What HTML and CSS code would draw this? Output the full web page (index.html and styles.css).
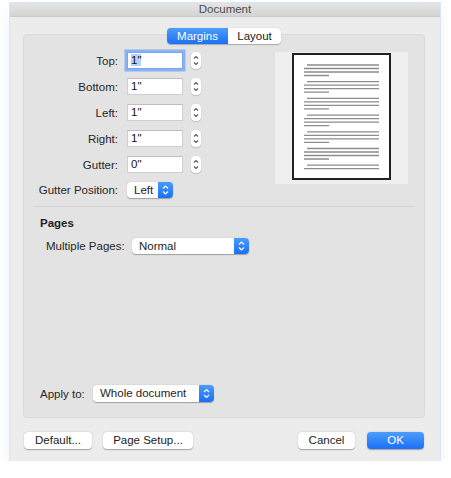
FILE: index.html
```html
<!DOCTYPE html>
<html>
<head>
<meta charset="utf-8">
<link rel="stylesheet" href="styles.css">
</head>
<body>
<div class="window">
  <div class="titlebar">Document</div>
  <div class="content">
    <div class="tabs">
      <div class="tab active">Margins</div>
      <div class="tab">Layout</div>
    </div>
    <div class="group">
      <div class="top">
        <div class="form">
          <div class="row">
            <span class="label">Top:</span>
            <span class="field focus"><span class="sel">1"</span></span>
            <span class="stepper"><svg width="10" height="17" viewBox="0 0 10 17"><path d="M3 6.5 L5 4.5 L7 6.5 M3 10.5 L5 12.5 L7 10.5" fill="none" stroke="#555" stroke-width="1.1"/></svg></span>
          </div>
          <div class="row">
            <span class="label">Bottom:</span>
            <span class="field">1"</span>
            <span class="stepper"><svg width="10" height="17" viewBox="0 0 10 17"><path d="M3 6.5 L5 4.5 L7 6.5 M3 10.5 L5 12.5 L7 10.5" fill="none" stroke="#555" stroke-width="1.1"/></svg></span>
          </div>
          <div class="row">
            <span class="label">Left:</span>
            <span class="field">1"</span>
            <span class="stepper"><svg width="10" height="17" viewBox="0 0 10 17"><path d="M3 6.5 L5 4.5 L7 6.5 M3 10.5 L5 12.5 L7 10.5" fill="none" stroke="#555" stroke-width="1.1"/></svg></span>
          </div>
          <div class="row">
            <span class="label">Right:</span>
            <span class="field">1"</span>
            <span class="stepper"><svg width="10" height="17" viewBox="0 0 10 17"><path d="M3 6.5 L5 4.5 L7 6.5 M3 10.5 L5 12.5 L7 10.5" fill="none" stroke="#555" stroke-width="1.1"/></svg></span>
          </div>
          <div class="row">
            <span class="label">Gutter:</span>
            <span class="field">0"</span>
            <span class="stepper"><svg width="10" height="17" viewBox="0 0 10 17"><path d="M3 6.5 L5 4.5 L7 6.5 M3 10.5 L5 12.5 L7 10.5" fill="none" stroke="#555" stroke-width="1.1"/></svg></span>
          </div>
          <div class="row row-pop">
            <span class="label">Gutter Position:</span>
            <span class="popup pop-gutter"><span class="pop-text">Left</span><span class="pop-arrow"><svg width="15" height="16" viewBox="0 0 15 16"><path d="M5 6.5 L7.5 4 L10 6.5 M5 9.5 L7.5 12 L10 9.5" fill="none" stroke="#fff" stroke-width="1.2"/></svg></span></span>
          </div>
        </div>
        <div class="preview">
          <svg width="99" height="127" viewBox="0 0 99 127">
            <rect x="1" y="1" width="97" height="125" fill="#fff" stroke="#222" stroke-width="2"/>
            <g stroke="#8c8c8c" stroke-width="1.3">
              <path d="M15 12H87M12 15.5H87M12 19H87M12 22.5H37"/>
              <path d="M15 28.7H87M12 32.2H87M12 35.7H87M12 39.2H37"/>
              <path d="M15 45.4H87M12 48.9H87M12 52.4H87M12 55.9H37"/>
              <path d="M15 62.1H87M12 65.6H87M12 69.1H87M12 72.6H37"/>
              <path d="M15 78.8H87M12 82.3H87M12 85.8H87M12 89.3H37"/>
              <path d="M15 95.5H87M12 99H87M12 102.5H87M12 106H37"/>
              <path d="M15 112.2H87M12 115.7H87"/>
            </g>
          </svg>
        </div>
      </div>
      <div class="sep"></div>
      <div class="heading">Pages</div>
      <div class="row mp-row">
        <span class="mp-label">Multiple Pages:</span>
        <span class="popup pop-mp"><span class="pop-text">Normal</span><span class="pop-arrow"><svg width="15" height="16" viewBox="0 0 15 16"><path d="M5 6.5 L7.5 4 L10 6.5 M5 9.5 L7.5 12 L10 9.5" fill="none" stroke="#fff" stroke-width="1.2"/></svg></span></span>
      </div>
      <div class="spacer"></div>
      <div class="row apply-row">
        <span class="apply-label">Apply to:</span>
        <span class="popup pop-apply"><span class="pop-text">Whole document</span><span class="pop-arrow"><svg width="15" height="17" viewBox="0 0 15 17"><path d="M5 7 L7.5 4.5 L10 7 M5 10 L7.5 12.5 L10 10" fill="none" stroke="#fff" stroke-width="1.2"/></svg></span></span>
      </div>
    </div>
    <div class="buttons">
      <span class="btn btn-default">Default...</span>
      <span class="btn btn-setup">Page Setup...</span>
      <span class="grow"></span>
      <span class="btn btn-cancel">Cancel</span>
      <span class="btn btn-ok">OK</span>
    </div>
  </div>
</div>
</body>
</html>
```
FILE: styles.css
```css
* { box-sizing: border-box; }
html, body { margin: 0; padding: 0; background: #fff; }
body {
  font-family: "Liberation Sans", Arial, sans-serif;
  font-size: 11.5px;
  color: #262626;
}
.window {
  margin: 3px 0 0 10px;
  width: 430px;
  height: 458px;
  background: #ececec;
  box-shadow: 0 0 0 1px rgba(205, 218, 245, 0.7), 0 6px 14px rgba(150, 175, 230, 0.18);
  display: flex;
  flex-direction: column;
}
.titlebar {
  height: 14px;
  line-height: 13px;
  text-align: center;
  color: #4d4d4d;
  background: linear-gradient(#e4e4e4, #d4d4d4);
  border-bottom: 1px solid #cacaca;
  font-size: 11.5px;
}
.content {
  padding: 11px 15px 0 13px;
  display: flex;
  flex-direction: column;
}
.tabs {
  display: flex;
  justify-content: center;
  height: 16px;
  position: relative;
  z-index: 2;
}
.tab {
  height: 16px;
  line-height: 16px;
  text-align: center;
  background: #fff;
  color: #222;
  box-shadow: 0 0.5px 1px rgba(0,0,0,0.25);
}
.tab.active {
  width: 61px;
  color: #fff;
  background: linear-gradient(#4d9dfb, #1c70f5);
  border-radius: 4px 0 0 4px;
}
.tab:not(.active) {
  width: 53px;
  border-radius: 0 4px 4px 0;
}
.group {
  margin-top: -10px;
  height: 384px;
  background: #e3e3e3;
  border: 1px solid #dadada;
  border-radius: 4px;
  display: flex;
  flex-direction: column;
}
.top {
  display: flex;
  justify-content: space-between;
  padding: 17px 16px 0 0;
}
.form {
  display: flex;
  flex-direction: column;
  gap: 9px;
}
.row {
  display: flex;
  align-items: center;
  height: 17px;
  white-space: nowrap;
}
.row-pop { height: 16px; }
.label {
  width: 94px;
  flex-shrink: 0;
  text-align: right;
  margin-right: 9px;
}
.field {
  width: 56px;
  height: 17px;
  background: #fff;
  border: 1px solid #cfcfcf;
  border-top-color: #bdbdbd;
  padding-left: 3px;
  line-height: 15px;
  color: #111;
}
.field.focus {
  box-shadow: 0 0 0 2.5px #8ab2f2;
  border-color: #7aa6ee;
}
.sel { background: #b5d3fb; }
.stepper {
  margin-left: 8px;
  width: 10px;
  height: 17px;
  background: #fff;
  border-radius: 4px;
  box-shadow: 0 0.5px 1px rgba(0,0,0,0.3);
  display: flex;
}
.popup {
  display: flex;
  flex-shrink: 0;
  height: 16px;
  background: #fff;
  border-radius: 4px;
  box-shadow: 0 0.5px 1px rgba(0,0,0,0.3);
  overflow: hidden;
}
.pop-text {
  flex: 1;
  line-height: 16px;
  color: #1e1e1e;
}
.pop-arrow {
  width: 15px;
  background: linear-gradient(#4a9bfb, #1b6ff5);
  display: flex;
}
.pop-gutter { width: 46px; }
.pop-gutter .pop-text { padding-left: 7px; }
.preview {
  width: 133px;
  height: 132px;
  background: #efefef;
  padding: 1px 17px 0 17px;
  display: flex;
  align-items: flex-start;
}
.preview svg { display: block; }
.sep {
  height: 1px;
  background: #d3d3d3;
  margin: 8px 9px 0 9px;
}
.heading {
  font-weight: bold;
  margin: 9px 0 0 16px;
  line-height: 14px;
  color: #222;
}
.mp-row {
  margin: 8px 0 0 22px;
  height: 16px;
}
.mp-label { width: 78px; flex-shrink: 0; margin-right: 8px; }
.pop-mp { width: 117px; }
.pop-mp .pop-text { padding-left: 7px; }
.spacer { flex: 1; }
.apply-row {
  margin: 0 0 15px 16px;
  height: 17px;
}
.apply-label { width: 45px; flex-shrink: 0; margin-right: 8px; }
.pop-apply { width: 121px; height: 17px; }
.pop-apply .pop-text { padding-left: 7px; line-height: 17px; }
.buttons {
  display: flex;
  margin-top: 14px;
  padding: 0 1px 0 1px;
}
.grow { flex: 1; }
.btn {
  height: 17px;
  line-height: 17px;
  text-align: center;
  background: #fff;
  border-radius: 4px;
  box-shadow: 0 0.5px 1.2px rgba(0,0,0,0.32);
  color: #222;
}
.btn-default { width: 68px; }
.btn-setup { width: 90px; margin-left: 11px; }
.btn-cancel { width: 57px; }
.btn-ok {
  width: 57px;
  margin-left: 12px;
  color: #fff;
  background: linear-gradient(#4d9dfb, #1c70f5);
}
```
